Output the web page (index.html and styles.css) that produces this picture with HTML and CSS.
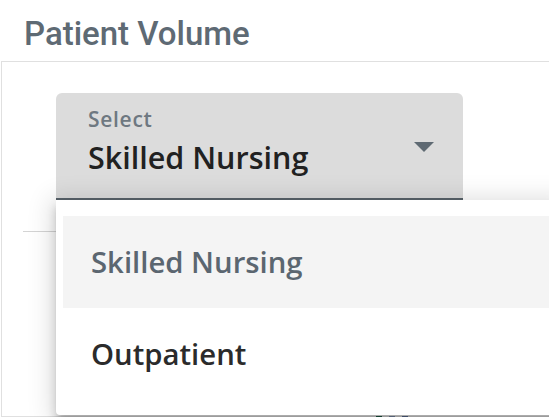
FILE: index.html
```html
<!DOCTYPE html>
<html>
<head>
<meta charset="utf-8">
<link rel="stylesheet" href="styles.css">
</head>
<body>
<header class="header">
  <h1 class="title">Patient Volume</h1>
</header>
<section class="card">
  <div class="select">
    <div class="select-text">
      <div class="select-label">Select</div>
      <div class="select-value">Skilled Nursing</div>
    </div>
    <span class="select-arrow"></span>
  </div>
  <div class="divider"></div>
  <div class="legend">
    <span class="swatch swatch-green"></span>
    <span class="swatch swatch-blue"></span>
    <span class="swatch swatch-navy"></span>
  </div>
  <ul class="menu">
    <li class="menu-item menu-item-active">Skilled Nursing</li>
    <li class="menu-item">Outpatient</li>
  </ul>
</section>
</body>
</html>
```
FILE: styles.css
```css
html, body {
  margin: 0;
  padding: 0;
  background: #ffffff;
  width: 549px;
  height: 417px;
  overflow: hidden;
}

.header {
  height: 61px;
  padding-left: 24px;
  box-sizing: border-box;
  padding-top: 14px;
}

.title {
  margin: 0;
  font-family: Roboto, "Liberation Sans", sans-serif;
  font-weight: 500;
  font-size: 33px;
  line-height: 40px;
  color: #5e6a74;
}

.card {
  position: relative;
  margin-left: 1px;
  height: 356px;
  box-sizing: border-box;
  border: 1px solid #e0e0e0;
  border-right: none;
  padding-top: 31px;
}

.select {
  display: flex;
  margin-left: 54px;
  width: 407px;
  height: 107px;
  box-sizing: border-box;
  padding-top: 14px;
  background: #dcdcdc;
  border-radius: 6px 6px 0 0;
  border-bottom: 2px solid #59636b;
  overflow: hidden;
}

.select-text {
  flex: 1;
  padding-left: 32px;
  font-family: "Open Sans", "Liberation Sans", sans-serif;
  font-weight: 600;
}

.select-label {
  font-size: 21px;
  line-height: 24px;
  letter-spacing: 0.7px;
  color: #6e7881;
}

.select-value {
  margin-top: 9px;
  font-size: 30.5px;
  line-height: 34px;
  height: 37px;
  overflow: hidden;
  color: #212121;
}

.select-arrow {
  width: 0;
  height: 0;
  margin-top: 35px;
  margin-right: 29px;
  border-left: 10px solid transparent;
  border-right: 10px solid transparent;
  border-top: 10px solid #5f6a73;
}

.divider {
  margin-top: 31px;
  margin-left: 21px;
  height: 1px;
  background: #d4d4d4;
}

.legend {
  position: absolute;
  left: 374px;
  bottom: -1px;
  display: flex;
  gap: 7px;
}

.swatch {
  width: 6px;
  height: 1px;
}

.swatch-green { background: #1d5c47; }
.swatch-blue { background: #7d8daa; }
.swatch-navy { background: #5a6d93; }

.menu {
  position: absolute;
  top: 138px;
  left: 54px;
  right: -20px;
  bottom: 1px;
  margin: 0;
  padding: 16px 0 0 7px;
  list-style: none;
  background: #ffffff;
  border-radius: 0 0 4px 4px;
  box-shadow: 0 5px 5px -3px rgba(0, 0, 0, 0.2),
              0 8px 10px 1px rgba(0, 0, 0, 0.14),
              0 3px 24px 6px rgba(0, 0, 0, 0.12);
  font-family: "Open Sans", "Liberation Sans", sans-serif;
  font-weight: 600;
}

.menu-item {
  height: 92px;
  display: flex;
  align-items: center;
  padding-left: 28px;
  font-size: 29.3px;
  color: #2b2b2b;
}

.menu-item-active {
  background: #f4f4f4;
  color: #5b6670;
}
```
